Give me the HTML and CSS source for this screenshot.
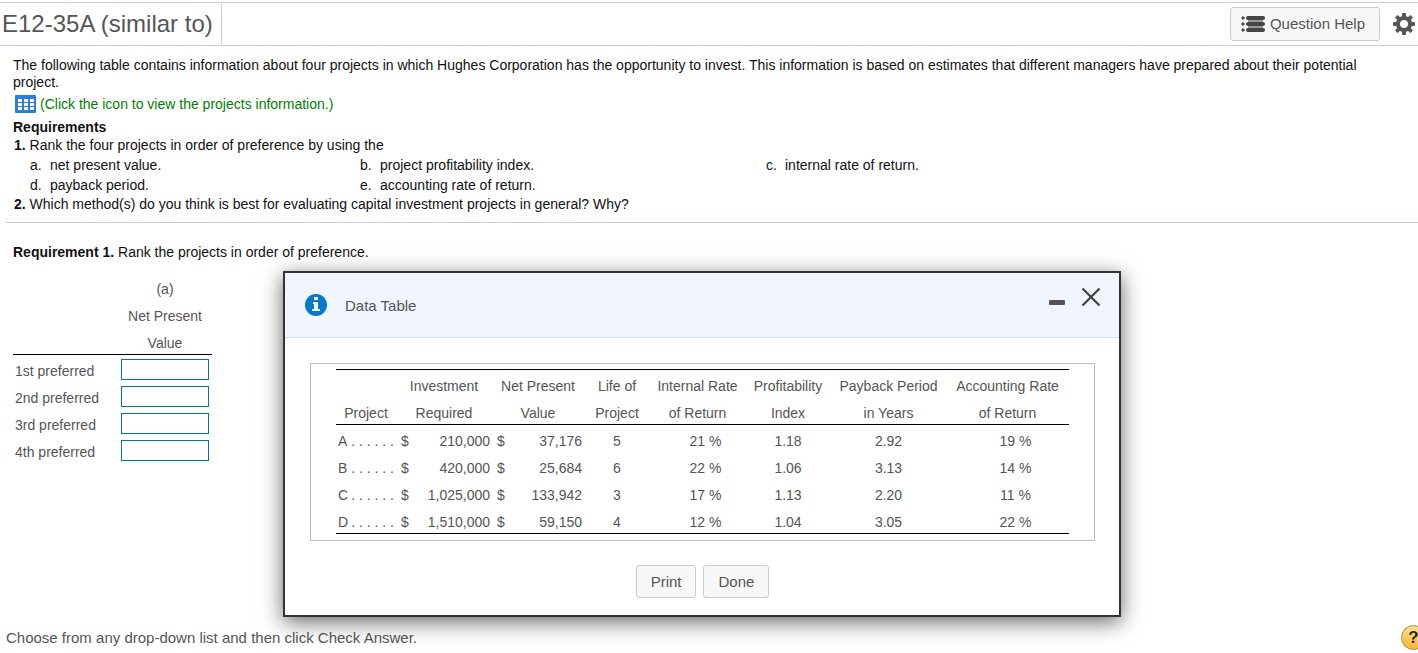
FILE: index.html
```html
<!DOCTYPE html>
<html lang="en">
<head>
    <meta charset="UTF-8">
    <meta name="viewport" content="width=device-width, initial-scale=1.0">
    <title>E12-35A (similar to)</title>
    <link rel="stylesheet" href="styles.css">
</head>
<body>
    <header class="topbar">
        <h1>E12-35A (similar to)</h1>
        <div class="tools">
            <button type="button" class="btn help-btn">
                <svg width="24" height="16" viewBox="0 0 24 16" fill="#444">
                    <path d="M2 0l2 2-2 2-2-2zM2 6l2 2-2 2-2-2zM2 12l2 2-2 2-2-2z"/>
                    <path d="M7 3h15v10H7z" fill="#999"/>
                    <rect x="5" y="0" width="19" height="4" rx="2"/>
                    <rect x="5" y="6" width="19" height="4" rx="2"/>
                    <rect x="5" y="12" width="19" height="4" rx="2"/>
                </svg>
                Question Help
            </button>
            <button type="button" class="icon-btn" aria-label="Settings">
                <svg width="22" height="22" viewBox="0 0 22 22">
                    <g fill="#555">
                        <rect x="9" y="0" width="4" height="22" rx="1"/>
                        <rect x="9" y="0" width="4" height="22" rx="1" transform="rotate(45 11 11)"/>
                        <rect x="9" y="0" width="4" height="22" rx="1" transform="rotate(90 11 11)"/>
                        <rect x="9" y="0" width="4" height="22" rx="1" transform="rotate(135 11 11)"/>
                        <circle cx="11" cy="11" r="8"/>
                    </g>
                    <circle cx="11" cy="11" r="4" fill="#fff"/>
                </svg>
            </button>
        </div>
    </header>

    <main>
        <section class="problem">
            <p>The following table contains information about four projects in which Hughes Corporation has the opportunity to invest. This information is based on estimates that different managers have prepared about their potential project.</p>
            <a href="#data-table" class="data-link">
                <svg width="21" height="18" viewBox="0 0 21 18">
                    <rect width="21" height="18" rx="1" fill="#2a7de1"/>
                    <path d="M3 4h4v3H3zM9 4h4v3H9zM15 4h4v3h-4zM3 8h4v3H3zM9 8h4v3H9zM15 8h4v3h-4zM3 12h4v3H3zM9 12h4v3H9zM15 12h4v3h-4z" fill="#fff"/>
                </svg>
                (Click the icon to view the projects information.)
            </a>
            <h2>Requirements</h2>
            <div class="requirement"><b>1.</b> Rank the four projects in order of preference by using the</div>
            <div class="methods">
                <span>a.</span><span>net present value.</span>
                <span>b.</span><span>project profitability index.</span>
                <span>c.</span><span>internal rate of return.</span>
                <span>d.</span><span>payback period.</span>
                <span>e.</span><span>accounting rate of return.</span>
            </div>
            <div class="requirement"><b>2.</b> Which method(s) do you think is best for evaluating capital investment projects in general? Why?</div>
        </section>

        <section class="answer">
            <p><b>Requirement 1.</b> Rank the projects in order of preference.</p>
            <table class="ledger rank-table">
                <thead>
                    <tr><th></th><th>(a)</th></tr>
                    <tr><th></th><th>Net Present</th></tr>
                    <tr><th></th><th>Value</th></tr>
                </thead>
                <tbody>
                    <tr><td><label for="rank1">1st preferred</label></td><td><input type="text" id="rank1"></td></tr>
                    <tr><td><label for="rank2">2nd preferred</label></td><td><input type="text" id="rank2"></td></tr>
                    <tr><td><label for="rank3">3rd preferred</label></td><td><input type="text" id="rank3"></td></tr>
                    <tr><td><label for="rank4">4th preferred</label></td><td><input type="text" id="rank4"></td></tr>
                </tbody>
            </table>
        </section>
    </main>

    <footer>Choose from any drop-down list and then click Check Answer.</footer>

    <div class="modal" id="data-table" role="dialog" aria-labelledby="modal-title">
        <div class="modal-header">
            <svg width="22" height="22" viewBox="0 0 22 22">
                <circle cx="11" cy="11" r="11" fill="#007acc"/>
                <path d="M9 3h4v3H9zM8 8h5v7h2v2H7v-2h2v-5H8z" fill="#fff"/>
            </svg>
            <span class="modal-title" id="modal-title">Data Table</span>
            <div class="window-controls">
                <button type="button" class="icon-btn" aria-label="Minimize">
                    <svg width="16" height="18" viewBox="0 0 16 18"><rect y="12" width="16" height="5" rx="1" fill="#555"/></svg>
                </button>
                <button type="button" class="icon-btn" aria-label="Close">
                    <svg width="20" height="18" viewBox="0 0 20 18"><path d="M1.5 0.5l17 17M18.5 0.5l-17 17" stroke="#444" stroke-width="2.2"/></svg>
                </button>
            </div>
        </div>
        <div class="modal-body">
            <div class="table-frame">
                <table class="ledger data-table">
                    <colgroup>
                        <col class="col-project">
                        <col class="col-investment">
                        <col class="col-npv">
                        <col class="col-life">
                        <col class="col-irr">
                        <col class="col-index">
                        <col class="col-payback">
                        <col class="col-arr">
                    </colgroup>
                    <thead>
                        <tr><th></th><th>Investment</th><th>Net Present</th><th>Life of</th><th>Internal Rate</th><th>Profitability</th><th>Payback Period</th><th>Accounting Rate</th></tr>
                        <tr><th>Project</th><th>Required</th><th>Value</th><th>Project</th><th>of Return</th><th>Index</th><th>in Years</th><th>of Return</th></tr>
                    </thead>
                    <tbody>
                        <tr><td><div class="leader"><span>A</span><span>. . . . . .</span></div></td><td><div class="money"><span>$</span><span>210,000</span></div></td><td><div class="money"><span>$</span><span>37,176</span></div></td><td>5</td><td class="percent">21 %</td><td>1.18</td><td>2.92</td><td class="percent">19 %</td></tr>
                        <tr><td><div class="leader"><span>B</span><span>. . . . . .</span></div></td><td><div class="money"><span>$</span><span>420,000</span></div></td><td><div class="money"><span>$</span><span>25,684</span></div></td><td>6</td><td class="percent">22 %</td><td>1.06</td><td>3.13</td><td class="percent">14 %</td></tr>
                        <tr><td><div class="leader"><span>C</span><span>. . . . . .</span></div></td><td><div class="money"><span>$</span><span>1,025,000</span></div></td><td><div class="money"><span>$</span><span>133,942</span></div></td><td>3</td><td class="percent">17 %</td><td>1.13</td><td>2.20</td><td class="percent">11 %</td></tr>
                        <tr><td><div class="leader"><span>D</span><span>. . . . . .</span></div></td><td><div class="money"><span>$</span><span>1,510,000</span></div></td><td><div class="money"><span>$</span><span>59,150</span></div></td><td>4</td><td class="percent">12 %</td><td>1.04</td><td>3.05</td><td class="percent">22 %</td></tr>
                    </tbody>
                </table>
            </div>
            <div class="modal-actions">
                <button type="button" class="btn">Print</button>
                <button type="button" class="btn">Done</button>
            </div>
        </div>
    </div>

    <button type="button" class="help-badge" aria-label="Help">?</button>
</body>
</html>
```
FILE: styles.css
```css
* {
    box-sizing: border-box;
}
body {
    margin: 0;
    padding-top: 2px;
    font-family: Arial, "Liberation Sans", sans-serif;
    font-size: 14px;
    line-height: 17px;
    color: #111;
    background-color: #fff;
    overflow-x: hidden;
}
h1, h2, p {
    margin: 0;
}
button, input {
    font-family: inherit;
}

/* top bar */
.topbar {
    display: flex;
    justify-content: space-between;
    align-items: center;
    height: 44px;
    border-top: 1px solid #c8cddf;
    border-bottom: 1px solid #c8cddf;
}
.topbar h1 {
    padding: 0 8px 0 2px;
    border-right: 1px solid #c8cddf;
    font-size: 24px;
    font-weight: normal;
    line-height: 40px;
    color: #555;
}
.tools {
    display: flex;
    align-items: center;
    gap: 13px;
    padding-right: 3px;
}
.btn {
    padding: 0 14px;
    border: 1px solid #ccc;
    border-radius: 3px;
    background-color: #f7f7f7;
    font-size: 15px;
    line-height: 31px;
    color: #555;
    cursor: pointer;
}
.help-btn {
    display: flex;
    align-items: center;
    gap: 5px;
    padding: 0 14px 0 10px;
    line-height: 32px;
}
.icon-btn {
    padding: 0;
    border: none;
    background: none;
    cursor: pointer;
}
.icon-btn svg {
    display: block;
}

/* problem text */
.problem {
    margin-left: 6px;
    padding: 11px 30px 8px 7px;
    border-bottom: 1px solid #c8cddf;
}
.data-link {
    display: flex;
    align-items: center;
    gap: 4px;
    margin: 2px 0 4px 2px;
    line-height: 22px;
    color: #008000;
    text-decoration: none;
}
.problem h2 {
    font-size: 14px;
    line-height: 17px;
}
.requirement {
    padding-left: 1px;
    line-height: 19px;
}
.methods {
    display: grid;
    grid-template-columns: 20px 310px 20px 386px 19px auto;
    padding-left: 17px;
    line-height: 20px;
}

/* answer table */
.answer {
    padding: 21px 13px 0;
}
.ledger {
    border-collapse: separate;
    border-spacing: 0;
    color: #555;
    line-height: 22px;
}
.ledger th, .ledger td {
    padding: 5px 0 0;
    font-weight: normal;
    text-align: center;
    white-space: nowrap;
}
.ledger thead tr:last-child th {
    border-bottom: 1px solid #000;
}
.rank-table {
    margin-top: 12px;
    table-layout: fixed;
    width: 199px;
}
.rank-table th:first-child {
    width: 105px;
}
.rank-table td:first-child {
    padding-left: 2px;
    text-align: left;
}
.rank-table td:last-child {
    padding-top: 4px;
    vertical-align: top;
}
.rank-table input {
    display: block;
    width: 88px;
    height: 21px;
    margin: 0 auto;
    padding: 0 4px;
    border: 1px solid #007a99;
    background-color: #fff;
}
footer {
    margin-top: 166px;
    padding-left: 6px;
    font-size: 15px;
    color: #555;
}

/* data table dialog */
.modal {
    position: absolute;
    top: 271px;
    left: 283px;
    width: 838px;
    border: 2px solid #333;
    background-color: #fff;
    box-shadow: 0 5px 20px rgba(0, 0, 0, 0.6);
}
.modal-header {
    display: flex;
    align-items: center;
    gap: 18px;
    height: 65px;
    padding: 0 18px 0 20px;
    border-bottom: 1px solid #c5e2f1;
    background-color: #f0f5fe;
}
.modal-title {
    flex: 1;
    font-size: 15px;
}
.modal-title, .modal-actions {
    color: #555;
}
.window-controls {
    display: flex;
    gap: 16px;
    padding-bottom: 16px;
}
.modal-body {
    padding: 25px 24px 17px 25px;
}
.table-frame {
    padding: 5px 25px 6px;
    border: 1px solid #bbb;
}
.data-table {
    table-layout: fixed;
    width: 100%;
    border-top: 1px solid #000;
    border-bottom: 1px solid #000;
}
.col-project { width: 60px; }
.col-investment { width: 96px; }
.col-npv { width: 92px; }
.col-life { width: 66px; }
.col-irr { width: 95px; }
.col-index { width: 86px; }
.col-payback { width: 115px; }
.col-arr { width: 123px; }
.leader, .money {
    display: flex;
    justify-content: space-between;
    padding: 0 2px;
}
.money {
    padding-left: 5px;
}
.ledger .percent {
    padding-left: 16px;
}
.modal-actions {
    display: flex;
    justify-content: center;
    gap: 7px;
    padding-top: 24px;
}

/* floating help */
.help-badge {
    position: fixed;
    right: -8px;
    bottom: 3px;
    width: 25px;
    height: 25px;
    padding: 0;
    border: 1px solid #a98a45;
    border-radius: 50%;
    background: linear-gradient(#ffe08a, #f5b82e);
    font-size: 17px;
    font-weight: bold;
    color: #222;
}
```
